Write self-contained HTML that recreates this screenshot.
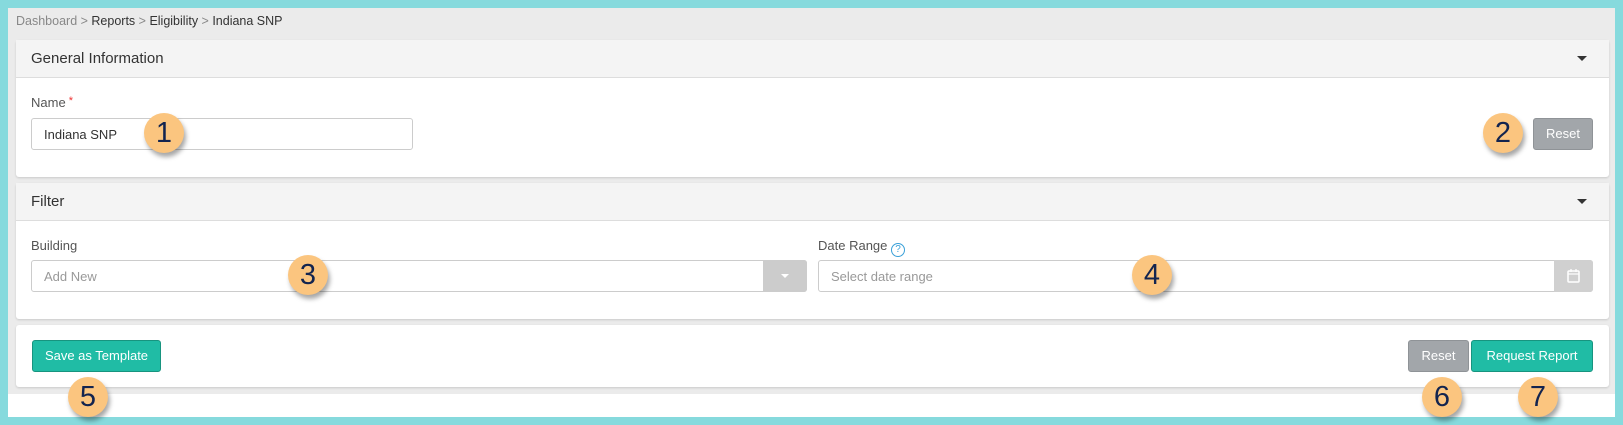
<!DOCTYPE html>
<html><head><style>
*{box-sizing:border-box;margin:0;padding:0}
body{width:1623px;height:425px;background:#86dadd;font-family:"Liberation Sans",sans-serif;position:relative;overflow:hidden}
.in{position:absolute;left:8px;top:8px;width:1607px;height:409px;background:#ebebeb}
.strip{position:absolute;left:8px;top:394px;width:1607px;height:23px;background:#fff}
.ab{position:absolute}
.panel{position:absolute;left:16px;width:1593px;background:#fff;border-radius:3px;box-shadow:0 1px 2px rgba(0,0,0,.15)}
.hd{height:38px;background:#f4f4f4;border-bottom:1px solid #ddd;font-size:15px;color:#333;padding:10px 15px;position:relative}
.caret{position:absolute;right:22px;top:16px;border-left:5px solid transparent;border-right:5px solid transparent;border-top:5px solid #333}
.lbl{font-size:13px;color:#555}
.inp{border:1px solid #ccc;border-radius:3px;height:32px;font-size:13px;padding:8px 12px;color:#333;background:#fff}
.btn{border-radius:3px;color:#fff;font-size:13px;text-align:center;line-height:30px;height:32px}
.gray{background:#a2a6aa;border:1px solid #8f9397}
.teal{background:#20bca5;border:1px solid #17947f}
.badge{position:absolute;width:40px;height:40px;border-radius:50%;background:#fbc57f;color:#13244f;font-size:29px;text-align:center;line-height:40px;box-shadow:2px 4px 5px rgba(0,0,0,.35)}
</style></head><body>
<div class="in"></div>
<div class="strip"></div>
<div class="ab" style="left:16px;top:14px;font-size:12.5px;color:#888">Dashboard &gt; <span style="color:#333">Reports</span> &gt; <span style="color:#333">Eligibility</span> &gt; <span style="color:#333">Indiana SNP</span></div>

<div class="panel" style="top:40px;height:137px">
 <div class="hd">General Information<div class="caret"></div></div>
</div>
<div class="ab lbl" style="left:31px;top:95px">Name<span style="color:#e33;font-size:11px;vertical-align:top"> *</span></div>
<div class="ab inp" style="left:31px;top:118px;width:382px">Indiana SNP</div>
<div class="ab btn gray" style="left:1533px;top:118px;width:60px">Reset</div>

<div class="panel" style="top:183px;height:136px">
 <div class="hd">Filter<div class="caret"></div></div>
</div>
<div class="ab lbl" style="left:31px;top:238px">Building</div>
<div class="ab inp" style="left:31px;top:260px;width:776px;color:#999">Add New</div>
<div class="ab" style="left:763px;top:260px;width:44px;height:32px;background:#ccc;border-radius:0 3px 3px 0"><div style="margin:14px auto 0;width:0;border-left:4px solid transparent;border-right:4px solid transparent;border-top:4px solid #fff"></div></div>
<div class="ab lbl" style="left:818px;top:238px">Date Range <span style="display:inline-block;width:14px;height:14px;border:1px solid #3aa0d8;border-radius:50%;color:#3aa0d8;font-size:10px;text-align:center;line-height:12px;vertical-align:-2px">?</span></div>
<div class="ab inp" style="left:818px;top:260px;width:775px;color:#999">Select date range</div>
<div class="ab" style="left:1554px;top:260px;width:39px;height:32px;background:#d0d0d0;border-radius:0 3px 3px 0">
<svg width="39" height="32"><rect x="14" y="11" width="11" height="11" rx="1" fill="none" stroke="#fff" stroke-width="1.5"/><line x1="14" y1="14" x2="25" y2="14" stroke="#fff" stroke-width="1.2"/><line x1="17" y1="9" x2="17" y2="12" stroke="#fff" stroke-width="1.3"/><line x1="22" y1="9" x2="22" y2="12" stroke="#fff" stroke-width="1.3"/></svg></div>

<div class="panel" style="top:325px;height:62px"></div>
<div class="ab btn teal" style="left:32px;top:340px;width:129px">Save as Template</div>
<div class="ab btn gray" style="left:1408px;top:340px;width:61px">Reset</div>
<div class="ab btn teal" style="left:1471px;top:340px;width:122px">Request Report</div>

<div class="badge" style="left:144px;top:113px">1</div>
<div class="badge" style="left:1483px;top:113px">2</div>
<div class="badge" style="left:288px;top:255px">3</div>
<div class="badge" style="left:1132px;top:255px">4</div>
<div class="badge" style="left:68px;top:377px">5</div>
<div class="badge" style="left:1422px;top:377px">6</div>
<div class="badge" style="left:1518px;top:377px">7</div>
</body></html>
